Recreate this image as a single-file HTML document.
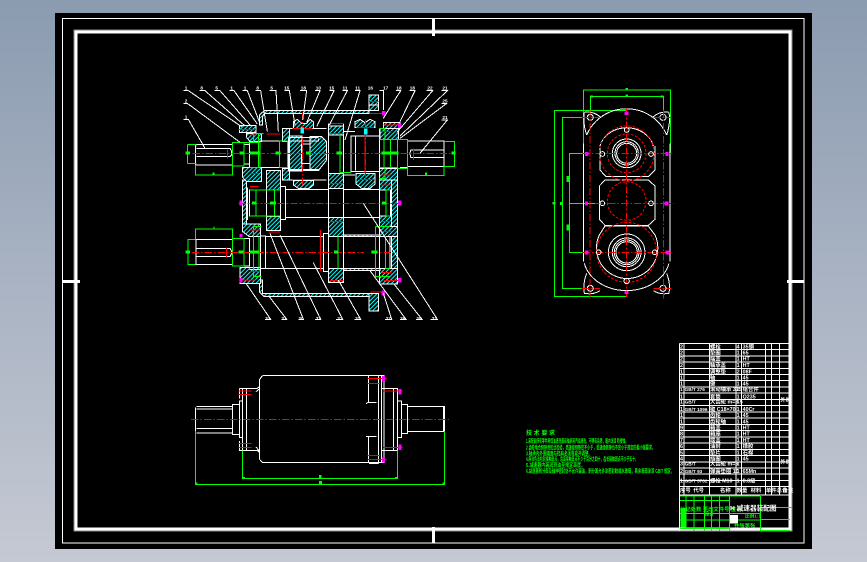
<!DOCTYPE html>
<html><head><meta charset="utf-8"><style>
html,body{margin:0;padding:0;width:867px;height:562px;overflow:hidden;background:linear-gradient(180deg,#8b9bb0 0%,#a9b3c3 50%,#c5c9d3 100%)}
svg{position:absolute;left:0;top:0}
.w{fill:none;stroke:#fff;stroke-width:3}
.g{fill:none;stroke:#0f0;stroke-width:3}
.r{fill:none;stroke:#f00;stroke-width:3;stroke-dasharray:22 6 5 6}
.rs{fill:none;stroke:#f00;stroke-width:3}
.rd{fill:none;stroke:#f00;stroke-width:3;stroke-dasharray:8 5}
.h{fill:url(#h);stroke:#fff;stroke-width:3}
.m{fill:#f0f}
.gf{fill:#0f0}
.wf{fill:#fff}
.n{font:bold 14px "Liberation Sans",sans-serif;fill:#fff;text-anchor:middle}
.t{font:bold 16px "Liberation Sans","Noto Sans CJK SC",sans-serif;fill:#fff}
.gt{font:bold 5.6px "Liberation Sans","Noto Sans CJK SC",sans-serif;fill:#0f0}
</style></head><body>
<svg width="867" height="562" viewBox="0 0 867 562" shape-rendering="crispEdges">
<defs>
<pattern id="h" width="9" height="9" patternUnits="userSpaceOnUse" patternTransform="rotate(45)">
<rect width="9" height="9" fill="#000"/><rect width="3.500" height="9" fill="#0ff"/>
</pattern>
</defs>
<rect x="55" y="13" width="757" height="536" fill="#000"/>
<rect x="62.500" y="18.500" width="741.500" height="524.500" fill="none" stroke="#fff"/>
<rect x="74" y="30" width="718" height="501" fill="none" stroke="#888" stroke-width="1"/>
<rect x="76" y="32" width="714" height="497" fill="none" stroke="#fff" stroke-width="3"/>
<g fill="#fff">
<rect x="432" y="18" width="3" height="18"/><rect x="432" y="527" width="3" height="16"/>
<rect x="62" y="280" width="18" height="3"/><rect x="787" y="280" width="17" height="3"/>
</g>

<!-- MAIN SECTION VIEW -->
<g transform="translate(170 80) scale(.33333)">
<path class="h" d="M283,92H597V100H283L278,110V135H268V105Z"/>
<rect class="h" x="597" y="45" width="28" height="30"/><rect class="h" x="597" y="75" width="28" height="17"/>
<path class="h" d="M278,600V640H597V650H283L268,635V600Z"/>
<rect class="h" x="597" y="640" width="28" height="53"/>
<rect class="h" x="218" y="300" width="12" height="135"/>
<rect class="h" x="665" y="290" width="18" height="310"/>
<path class="h" d="M208,137H258V158H208Z"/><path class="h" d="M230,160H275V185H240L230,172Z"/>
<path class="h" d="M218,262H275V305H230L218,292Z"/>
<path class="h" d="M218,432H272V470H238L218,455Z"/>
<path class="h" d="M210,562H272V610H210Z"/>
<path class="h" d="M630,145H685V178H630Z"/><path class="h" d="M628,265H683V300H628Z"/>
<path class="h" d="M628,300H665V330H628Z"/><path class="h" d="M628,408H665V440H628Z"/>
<path class="h" d="M628,440H683V470H628Z"/><path class="h" d="M628,565H683V612H628Z"/>
<path class="h" d="M640,128H690V145H640Z"/>
<path class="h" d="M338,145H358V185H338Z"/><path class="h" d="M338,265H358V300H338Z"/>
<rect class="h" x="358" y="168" width="38" height="105"/>
<path class="h" d="M420,170H455L470,185V240L445,272H420Z"/>
<rect class="h" x="290" y="272" width="42" height="58"/><rect class="h" x="290" y="410" width="42" height="42"/>
<rect class="h" x="475" y="138" width="45" height="27"/><rect class="h" x="475" y="280" width="45" height="45"/>
<rect class="h" x="475" y="412" width="45" height="58"/><rect class="h" x="475" y="566" width="45" height="42"/>
<path class="h" d="M370,145V125L382,118L395,130H410L420,118L430,125V145Z"/>
<path class="h" d="M370,302H430V315L418,325H385L370,315Z"/>
<path class="h" d="M555,142V125L570,118L585,128L600,118L615,125V142Z"/>
<path class="h" d="M558,280H615V312L600,325H575L558,312Z"/>
<path class="h" d="M522,465H630V470H522Z"/><path class="h" d="M522,565H630V572H522Z"/>
<path class="w" d="M77,193H187V255H77ZM77,198H80M80,205H180L184,212V225L180,230H80"/>
<path class="w" d="M222,193H238M222,252H238M238,185V262M270,183H355V262H270V183M355,172V275M355,172H445M355,272H445M355,183H445V175M358,268H445M395,192V250H420V192H395M338,300H470M338,145H470"/>
<path class="w" d="M475,165H520V280H475ZM520,155H555M520,285H555M543,168H628V275H543ZM556,170V272M628,145V300"/>
<path class="w" d="M690,178H712V262H690M712,183H822V260H712ZM722,210H822M722,233H822M722,210L720,220L722,233"/>
<path class="w" d="M238,330H332V408H238ZM232,322V420M332,320H347V418H332ZM347,328H475V412H347M475,325V412M520,325V412M520,328H628M520,412H628M628,330H662V408H628ZM258,330V408M290,330V408"/>
<path class="w" d="M78,478H187V553H78ZM80,505H180L184,512V522L180,530H80M222,475H238V558H222M238,470H272V568H238M272,468H287V566H272ZM287,470H460V566H287M460,460H475V574H460ZM475,470H520V566H475ZM520,470H660V566H520M628,470V566"/>
<path class="w" d="M475,325V130M520,325V130M683,290V180M683,600V300"/>
<path class="g" d="M52,193H80M52,250H80M53,193V250M77,255V285H187V255M187,187H222V258H187ZM222,187H270V262H238M250,160H280M250,160V187M265,160V262M328,183H352V262H328ZM510,165V278H543M510,278V165"/>
<path class="g" d="M712,262V286H822V260H853V185H822M683,178H712V265H683ZM628,178H683M628,262H683M642,178V262M662,178V262M628,145H645V178M628,295H645V262M258,330V408M313,330V408M240,330H330M240,408H330M648,330V408H660M648,330H660"/>
<path class="g" d="M76,478V447H187V475M187,475H222V558H187ZM53,478H77M53,553H77M54,478V553M250,440V590H275M250,440H275M267,470V568M504,466V568M617,440V590H660M617,440H660M646,468V566H660M132,440V447"/>
<path class="r" d="M68,220H850M205,370H697M65,517H582M603,517H662M397,98V320M587,118V312"/>
<path class="rs" d="M451,450V573M172,208V235M730,205V240M170,502V532M585,145V280"/>
<path class="rs" d="M597,65H625M205,148H258M205,600H258M640,135H690M640,602H690M602,636H650M600,100H640M238,165H260M240,280H265M240,320H265M240,450H268M240,575H270M635,155H665M635,285H665M635,315H665M635,425H665M635,455H665M635,578H665M478,130H520M478,160H520M478,310H520M478,425H520M478,602H520M368,145H428M368,298H428M560,142H612M565,298H612M290,162H330M295,456H330"/>
<g class="gf">
<rect x="46" y="215" width="14" height="9"/><rect x="845" y="215" width="12" height="9"/><rect x="208" y="215" width="14" height="9"/><rect x="240" y="215" width="28" height="9"/><rect x="316" y="215" width="16" height="9"/><rect x="408" y="215" width="14" height="9"/><rect x="500" y="215" width="16" height="9"/><rect x="635" y="215" width="50" height="9"/>
<rect x="246" y="364" width="14" height="9"/><rect x="300" y="364" width="18" height="9"/><rect x="636" y="364" width="14" height="9"/>
<rect x="46" y="511" width="14" height="9"/><rect x="206" y="511" width="14" height="9"/><rect x="240" y="511" width="28" height="9"/><rect x="492" y="511" width="14" height="9"/><rect x="604" y="511" width="18" height="9"/><rect x="128" y="278" width="6" height="8"/><rect x="765" y="278" width="6" height="8"/>
</g>
<g class="m">
<rect x="636" y="93" width="10" height="14"/><rect x="684" y="130" width="10" height="14"/><rect x="684" y="362" width="11" height="14"/><rect x="684" y="594" width="11" height="14"/><rect x="635" y="632" width="10" height="14"/><rect x="208" y="362" width="9" height="14"/><rect x="208" y="594" width="9" height="14"/><rect x="208" y="462" width="9" height="10"/>
</g>
<rect x="582" y="145" width="10" height="18" fill="#0ff"/><rect x="392" y="142" width="10" height="18" fill="#0ff"/>
<path class="w" d="M40,32H55L215,140M88,32H105L225,138M133,32H150L240,135M178,32H192L262,132M217,32H232L268,125M256,32H272L292,155M298,32H318L325,155M343,32H358L375,135M390,32H410L398,120M435,32H450L410,128M478,32H492L440,140M517,32H532L478,135M555,32H570L525,180M628,32H640V90M678,32H692L640,115M718,32H735L690,125M770,32H788L680,158M815,32H832L690,168M815,70H830L690,175M815,120H832L750,220M40,70H52L210,187M40,118H55L105,205"/>
<path class="w" d="M285,718H302L228,610M335,718H350L298,650M385,718H400L300,460M435,718H452L330,465M498,718H518L430,548M553,718H572L505,600M645,718H665L640,640M690,718H708L600,572M738,718H756L672,612M782,718H802L580,370"/>
<text class="n" x="48" y="29">1</text><text class="n" x="95" y="29">8</text><text class="n" x="140" y="29">5</text><text class="n" x="185" y="29">1</text><text class="n" x="225" y="29">1</text><text class="n" x="263" y="29">8</text><text class="n" x="305" y="29">5</text><text class="n" x="350" y="29">15</text><text class="n" x="400" y="29">18</text><text class="n" x="445" y="29">10</text><text class="n" x="485" y="29">15</text><text class="n" x="525" y="29">11</text><text class="n" x="563" y="29">11</text><text class="n" x="601" y="29">16</text><text class="n" x="647" y="29">17</text><text class="n" x="687" y="29">18</text><text class="n" x="727" y="29">18</text><text class="n" x="780" y="29">22</text><text class="n" x="825" y="29">21</text><text class="n" x="825" y="67">25</text><text class="n" x="825" y="117">21</text><text class="n" x="48" y="67">2</text><text class="n" x="48" y="115">1</text>
<text class="n" x="293" y="720">32</text><text class="n" x="342" y="720">31</text><text class="n" x="393" y="720">30</text><text class="n" x="445" y="720">32</text><text class="n" x="510" y="720">22</text><text class="n" x="563" y="720">31</text><text class="n" x="655" y="720">27</text><text class="n" x="698" y="720">26</text><text class="n" x="747" y="720">28</text><text class="n" x="793" y="720">27</text>
</g>

<!-- SIDE VIEW -->
<g transform="translate(540 80) scale(.33333)">
<path class="g" d="M130,215V30H391V220M151,100V50H370V100M260,92H44V650H260M130,112H67V625H130M130,220H88V517H130M88,370H165"/>
<g class="gf"><rect x="257" y="24" width="7" height="7"/><rect x="257" y="43" width="7" height="7"/><rect x="37" y="366" width="10" height="8"/><rect x="60" y="366" width="9" height="9"/><rect x="79" y="288" width="9" height="18"/><rect x="79" y="434" width="9" height="18"/><rect x="362" y="47" width="9" height="6"/><rect x="150" y="47" width="9" height="6"/></g>
<path class="w" d="M130,190V545M390,190V545M140,165A130,128 0 0 1 380,165M133,550A130,104 0 0 0 387,550M133,97Q160,92 182,112M133,97Q128,130 140,165M387,97Q360,92 338,112M387,97Q392,130 380,165M133,640Q128,610 140,580M133,640Q160,645 180,632M387,640Q392,610 380,580M387,640Q360,645 340,632"/>
<circle class="w" cx="151" cy="112" r="9"/><circle class="w" cx="369" cy="112" r="9"/><circle class="w" cx="151" cy="625" r="9"/><circle class="w" cx="369" cy="625" r="9"/>
<path class="w" d="M180,198A82,70 0 0 1 340,198M180,198V270L198,290H325L345,270V198M178,318L195,300H325L345,318V418L325,436H195L178,418ZM195,438H325M178,465L195,438M345,465L325,438M178,465A92,92 0 1 0 345,465"/>
<circle class="w" cx="260" cy="220" r="43"/><circle class="w" cx="260" cy="220" r="35"/><circle class="w" cx="260" cy="220" r="30"/>
<circle class="w" cx="260" cy="517" r="55"/><circle class="w" cx="260" cy="517" r="43"/><circle class="w" cx="260" cy="517" r="37"/><circle class="w" cx="260" cy="517" r="32"/>
<circle class="rd" cx="260" cy="220" r="58"/><circle class="rd" cx="260" cy="220" r="82"/><circle class="rd" cx="260" cy="363" r="58"/><circle class="rd" cx="260" cy="517" r="90"/>
<path class="r" d="M260,85V655M128,220H395M165,370H400M128,517H395M150,90V655M370,90V655M125,112H180M340,112H395M125,625H180M340,625H395"/>
<g class="w"><circle cx="187" cy="222" r="7"/><circle cx="333" cy="222" r="7"/><circle cx="187" cy="370" r="7"/><circle cx="333" cy="370" r="7"/><circle cx="176" cy="517" r="7"/><circle cx="344" cy="517" r="7"/><circle cx="260" cy="150" r="7"/><circle cx="260" cy="603" r="8"/></g>
<g class="m"><rect x="135" y="216" width="10" height="12"/><rect x="376" y="216" width="10" height="12"/><rect x="135" y="364" width="9" height="12"/><rect x="374" y="364" width="11" height="12"/><rect x="135" y="512" width="10" height="12"/><rect x="377" y="512" width="10" height="12"/><rect x="253" y="95" width="13" height="10"/><rect x="253" y="633" width="13" height="9"/></g>
</g>

<!-- BOTTOM VIEW -->
<g transform="translate(180 365) scale(.33333)">
<path class="w" d="M47,128V198M50,124H157V204H50M50,132H157M50,190H157M157,118H178V208H157ZM178,108H187V218H178ZM187,70V256M200,70V256M178,70H232L238,65V45L246,33L255,31H612V292H247L238,282V262L232,256H178V228M178,70V100M228,80L238,72M228,246L238,258M238,45V282"/>
<path class="w" d="M565,31V112H590M558,116L565,112M565,292V215H590M558,215H565M596,31V296M605,31V292M567,296H596M605,70H652V256H605M640,70V256M652,108H665V218H652ZM665,118H682V206H665ZM682,124H790V200H682M790,124H793V198"/>
<path class="g" d="M47,198V358H793V198M187,256V340H652V256"/>
<g class="gf"><rect x="417" y="330" width="8" height="10"/><rect x="417" y="348" width="9" height="10"/><rect x="186" y="336" width="9" height="5"/><rect x="645" y="336" width="9" height="5"/><rect x="45" y="353" width="8" height="5"/><rect x="788" y="353" width="7" height="5"/></g>
<path class="r" d="M33,163H810"/>
<path class="rs" d="M175,78H215M175,88H215M175,235H215M175,247H215M562,40H620M562,55H600M610,78H668M610,247H668M562,271H600M562,283H620"/>
<g class="m"><rect x="606" y="33" width="9" height="16"/><rect x="655" y="72" width="9" height="16"/><rect x="655" y="239" width="9" height="16"/><rect x="606" y="278" width="9" height="14"/></g>
</g>

<!-- NOTES -->
<g class="gt">
<text x="526" y="435" style="font-size:6px">技 术 要 求</text>
<text x="526" y="443" textLength="102" lengthAdjust="spacingAndGlyphs">1.装配前所有零件用煤油清洗滚动轴承用汽油清洗，不得有杂质，箱内涂漆 防侵蚀。</text>
<text x="526" y="449.500" textLength="129" lengthAdjust="spacingAndGlyphs">2.齿轮啮合侧隙用铅丝检验，高速级侧隙应不小于，低速级侧隙也不应小于规定的最小值要求。</text>
<text x="526" y="455.500" textLength="66" lengthAdjust="spacingAndGlyphs">3.轴承内外圈端面与挡肩必须靠紧并调整。</text>
<text x="526" y="461" textLength="112" lengthAdjust="spacingAndGlyphs">4.用涂色法检验接触斑点，齿高接触斑点不少于百分之四十，齿长接触斑点不少于五十。</text>
<text x="526" y="467" textLength="59" lengthAdjust="spacingAndGlyphs">5.减速器内装润滑油至规定高度。</text>
<text x="526" y="473" textLength="148" lengthAdjust="spacingAndGlyphs">6.减速器剖分面及轴伸密封处不允许漏油，剖分面允许涂密封胶或水玻璃，其余表面涂漆 GB/T 规定。</text>
</g>

<!-- TABLE -->
<g transform="translate(670 335) scale(.33333)">
<path class="w" d="M28,25V588M42,25V480M118,25V480M198,25V480M214,25V480M286,25V480M304,25V480M329,25V480M360,25V480M28,25H360M28,43.700H360M28,62.400H360M28,81.100H360M28,99.800H360M28,118.500H360M28,137.200H360M28,155.900H360M28,174.600H360M28,193.300H360M28,212H360M28,230.700H360M28,249.400H360M28,268.100H360M28,286.800H360M28,305.500H360M28,324.200H360M28,342.900H360M28,361.600H360M28,380.300H360M28,399H360M28,417.700H360M28,436.400H360M28,455.100H360M28,480H360"/>
<text class="t" x="30" y="40">2</text><text class="t" x="120" y="40">螺栓</text><text class="t" x="200" y="40">4</text><text class="t" x="218" y="40">35钢</text>
<text class="t" x="30" y="59">2</text><text class="t" x="120" y="59">垫圈</text><text class="t" x="200" y="59">1</text><text class="t" x="218" y="59">65</text>
<text class="t" x="30" y="77">2</text><text class="t" x="120" y="77">端盖</text><text class="t" x="200" y="77">1</text><text class="t" x="218" y="77">HT</text>
<text class="t" x="30" y="96">2</text><text class="t" x="120" y="96">轴承盖</text><text class="t" x="200" y="96">1</text><text class="t" x="218" y="96">HT</text>
<text class="t" x="30" y="115">1</text><text class="t" x="120" y="115">调整垫</text><text class="t" x="200" y="115">2</text><text class="t" x="218" y="115">08F</text>
<text class="t" x="30" y="134">1</text><text class="t" x="120" y="134">轴</text><text class="t" x="200" y="134">1</text><text class="t" x="218" y="134">45</text>
<text class="t" x="30" y="152">1</text><text class="t" x="120" y="152">键</text><text class="t" x="200" y="152">1</text><text class="t" x="218" y="152">45</text>
<text class="t" x="30" y="168" style="font-size:14px">1</text><text class="t" x="44" y="168" style="font-size:14px">GB/T 276</text><text class="t" x="120" y="168">滚动轴承 315</text><text class="t" x="200" y="168">2</text><text class="t" x="218" y="168">组合件</text>
<text class="t" x="30" y="190">1</text><text class="t" x="120" y="190">套筒</text><text class="t" x="200" y="190">1</text><text class="t" x="218" y="190">Q235</text>
<text class="t" x="30" y="205">1</text><text class="t" x="44" y="205" style="font-size:14px">GB/T</text><text class="t" x="120" y="205">大齿轮 m=3.5</text><text class="t" x="200" y="205">1</text><text class="t" x="331" y="200">外购</text>
<text class="t" x="30" y="228">1</text><text class="t" x="44" y="228" style="font-size:14px">GB/T 1096</text><text class="t" x="120" y="228">键 C18×70</text><text class="t" x="200" y="228">1</text><text class="t" x="218" y="228">40Cr</text>
<text class="t" x="30" y="246">1</text><text class="t" x="120" y="246">齿轮</text><text class="t" x="200" y="246">1</text><text class="t" x="218" y="246">45</text>
<text class="t" x="30" y="265">1</text><text class="t" x="120" y="265">齿轮轴</text><text class="t" x="200" y="265">1</text><text class="t" x="218" y="265">45</text>
<text class="t" x="30" y="283">9</text><text class="t" x="120" y="283">箱盖</text><text class="t" x="200" y="283">1</text><text class="t" x="218" y="283">HT</text>
<text class="t" x="30" y="302">8</text><text class="t" x="120" y="302">箱座</text><text class="t" x="200" y="302">1</text><text class="t" x="218" y="302">HT</text>
<text class="t" x="30" y="321">7</text><text class="t" x="120" y="321">端盖</text><text class="t" x="200" y="321">1</text><text class="t" x="218" y="321">HT</text>
<text class="t" x="30" y="339">6</text><text class="t" x="120" y="339">油封</text><text class="t" x="200" y="339">1</text><text class="t" x="218" y="339">橡胶</text>
<text class="t" x="30" y="358">5</text><text class="t" x="120" y="358">垫片</text><text class="t" x="200" y="358">1</text><text class="t" x="218" y="358">石棉</text>
<text class="t" x="30" y="377">4</text><text class="t" x="120" y="377">挡圈</text><text class="t" x="200" y="377">1</text><text class="t" x="218" y="377">45</text>
<text class="t" x="30" y="391">3</text><text class="t" x="44" y="391" style="font-size:14px">GB/T</text><text class="t" x="120" y="391">大齿轮 m=3</text><text class="t" x="200" y="391">1</text><text class="t" x="331" y="385">外购</text>
<text class="t" x="30" y="414">2</text><text class="t" x="44" y="414" style="font-size:14px">GB/T 93</text><text class="t" x="120" y="414">弹簧垫圈 10</text><text class="t" x="200" y="414">1</text><text class="t" x="218" y="414">65Mn</text>
<text class="t" x="30" y="442">1</text><text class="t" x="44" y="442" style="font-size:14px">GB/T 5782</text><text class="t" x="120" y="442">螺栓 M10</text><text class="t" x="200" y="442">1</text><text class="t" x="218" y="442">8.8级</text>
<text class="t" x="30" y="471">序号</text><text class="t" x="70" y="471">代号</text><text class="t" x="150" y="471">名称</text><text class="t" x="200" y="471">数量</text><text class="t" x="242" y="471">材料</text><text class="t" x="288" y="471">单件总计</text><text class="t" x="338" y="471">备注</text>
<path class="g" d="M30,497H178M30,483H270M30,535H270M48,483V580M72,483V587M103,483V587M125,483V587M148,483V587M178,483V587M30,555H270M30,580H178M272,483V587H360M272,517H365M272,553H360"/>
<rect x="32" y="520" width="16" height="58" class="gf"/><rect x="180" y="540" width="24" height="25" class="wf"/>
<text x="30" y="528" style="font:bold 16px 'Liberation Sans','Noto Sans CJK SC',sans-serif;fill:#0f0">标记处数 更改文件号 签名</text>
<text x="104" y="542" style="font:bold 14px 'Liberation Sans','Noto Sans CJK SC',sans-serif;fill:#0f0">设计</text>
<text x="180" y="527" style="font:bold 20px 'Liberation Sans','Noto Sans CJK SC',sans-serif;fill:#fff">H 减速器装配图</text>
<text x="192" y="577" style="font:bold 16px 'Liberation Sans','Noto Sans CJK SC',sans-serif;fill:#0f0">共张第张</text>
<text x="225" y="547" style="font:bold 14px 'Liberation Sans','Noto Sans CJK SC',sans-serif;fill:#0f0">比例1:1</text>
</g>
</svg>
</body></html>
